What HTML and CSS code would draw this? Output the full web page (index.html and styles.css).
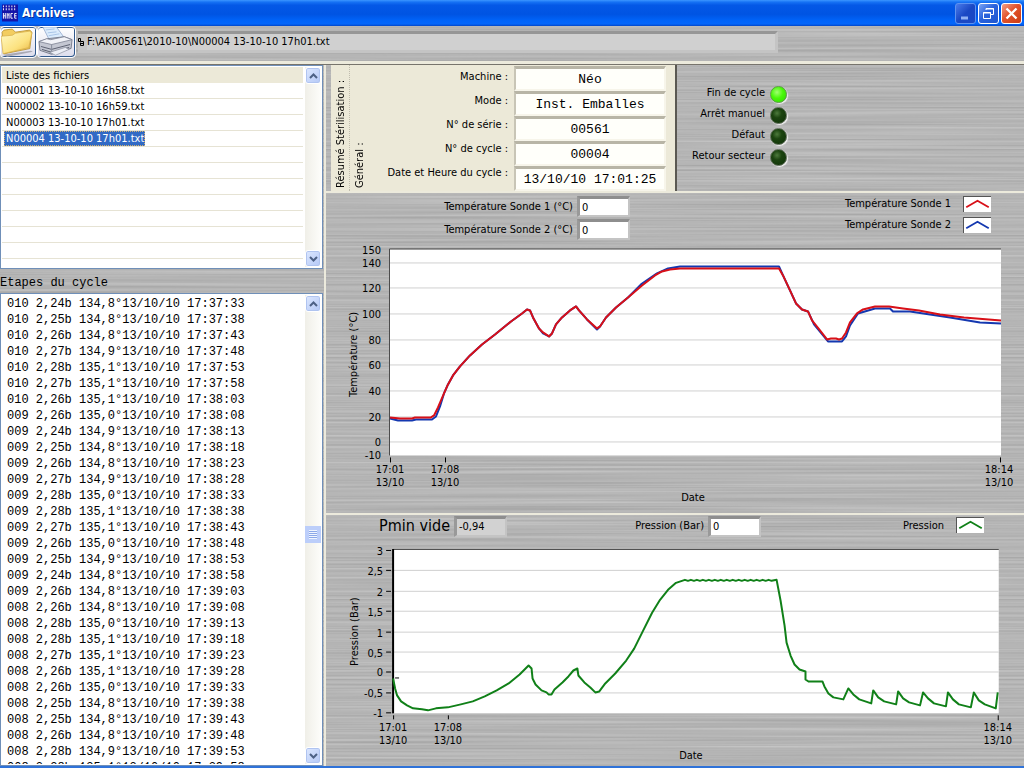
FILE: index.html
```html
<!DOCTYPE html>
<html lang="fr">
<head>
<meta charset="utf-8">
<title>Archives</title>
<link rel="stylesheet" href="styles.css">
</head>
<body>
<div class="window">
  <header class="titlebar">
    <svg class="app-icon" viewBox="0 0 17 18" aria-hidden="true">
      <rect width="17" height="18" fill="#1414a8"/>
      <path d="M1 2h15M1 5h15" stroke="#fff" stroke-width="2" stroke-dasharray="1 2"/>
      <path d="M1.500 9v6M3.500 9v6M1.500 12h2M5.500 9v6M7.500 9v6M6.500 10v2M11.500 9.500h-2v5h2M15.500 9.500h-2v5h2M13.500 12h2" stroke="#fff" fill="none"/>
    </svg>
    <h1 class="title">Archives</h1>
    <div class="caption-buttons">
      <button class="caption caption-dim" aria-label="Réduire"><svg viewBox="0 0 19 19"><path d="M5 14h7" stroke="#8fb0f4" stroke-width="3"/></svg></button>
      <button class="caption" aria-label="Restaurer"><svg viewBox="0 0 19 19" fill="none" stroke="#fff"><path d="M7 6V4.500h7.500v6H12M7 5h8"/><path d="M4.500 8.500h7v6h-7zM4 9h8"/></svg></button>
      <button class="caption caption-close" aria-label="Fermer"><svg viewBox="0 0 19 19"><path d="M4.500 4.500l10 10M14.500 4.500l-10 10" stroke="#fff" stroke-width="2.400"/></svg></button>
    </div>
  </header>

  <div class="toolbar metal">
    <button class="tool" aria-label="Ouvrir">
      <svg viewBox="0 0 34 30">
        <defs><linearGradient id="fold" x1="0" y1="0" x2="1" y2="1"><stop offset="0" stop-color="#fffac8"/><stop offset=".6" stop-color="#fce280"/><stop offset="1" stop-color="#e8b440"/></linearGradient></defs>
        <path d="M2 27l27-4 2 1-25 5z" fill="#a9a9b4"/>
        <path d="M1 5l2-2 8-1 3 3 14-2 2 2-2 16-25 5z" fill="#f3cd60" stroke="#b8902e" stroke-width=".8"/>
        <path d="M0 9l11-1 3-2 14-2 2 2-3 14-25 6z" fill="url(#fold)" stroke="#d8ae48" stroke-width=".7"/>
      </svg>
    </button>
    <button class="tool" aria-label="Imprimer">
      <svg viewBox="0 0 38 30">
        <path d="M5 0h14l8 11-15 3z" fill="#dcecfc" stroke="#8fa6cc" stroke-width=".8"/>
        <path d="M8 3l9-1M10 6l9-1M11 9l11-2" stroke="#a9c4e6"/>
        <path d="M1 15l9-3 17-2 8 3-1 9-20 6L2 24z" fill="#c4c7d2" stroke="#64697a" stroke-width=".8"/>
        <path d="M1 15l13 3 21-5-8-3-14 3-4-1z" fill="#f2f3f8" stroke="#7a7f90" stroke-width=".8"/>
        <path d="M3 20l11 3 19-5M4 23l10 3 18-5" stroke="#5b6070" fill="none"/>
        <path d="M14 18v9" stroke="#868b9a"/>
        <path d="M12 26l16-5 4 2-14 6z" fill="#eceef6" stroke="#7c8190" stroke-width=".6"/>
      </svg>
    </button>
    <label class="path">
      <svg class="path-icon" viewBox="0 0 6 9" fill="none" stroke="#000" aria-hidden="true"><path d="M.500.500h2v3h-2zM2.500 3.500h3v4h-3v-3M3 5.500h2"/></svg>
      <input class="path-input" type="text" readonly aria-label="Chemin du fichier" value="F:\AK00561\2010-10\N00004 13-10-10 17h01.txt">
    </label>
  </div>

  <main class="main">
    <section class="left metal">
      <div class="box files">
        <table class="file-table">
          <thead><tr><th scope="col">Liste des fichiers</th></tr></thead>
          <tbody>
            <tr><td>N00001 13-10-10 16h58.txt</td></tr>
            <tr><td>N00002 13-10-10 16h59.txt</td></tr>
            <tr><td>N00003 13-10-10 17h01.txt</td></tr>
            <tr aria-selected="true"><td><span class="selected">N00004 13-10-10 17h01.txt</span></td></tr>
            <tr><td></td></tr><tr><td></td></tr><tr><td></td></tr><tr><td></td></tr>
            <tr><td></td></tr><tr><td></td></tr><tr><td></td></tr>
          </tbody>
        </table>
        <div class="scroll">
          <button class="arrow" aria-label="Monter"><svg viewBox="0 0 9 6"><path d="M1 5l3.500-3.500L8 5"/></svg></button>
          <button class="arrow" aria-label="Descendre"><svg viewBox="0 0 9 6"><path d="M1 1l3.500 3.500L8 1"/></svg></button>
        </div>
      </div>
      <label class="steps-title" for="steps">Etapes du cycle</label>
      <div class="box steps">
        <textarea class="steps-text" id="steps" readonly>010 2,24b 134,8°13/10/10 17:37:33
010 2,25b 134,8°13/10/10 17:37:38
010 2,26b 134,8°13/10/10 17:37:43
010 2,27b 134,9°13/10/10 17:37:48
010 2,28b 135,1°13/10/10 17:37:53
010 2,27b 135,1°13/10/10 17:37:58
010 2,26b 135,1°13/10/10 17:38:03
009 2,26b 135,0°13/10/10 17:38:08
009 2,24b 134,9°13/10/10 17:38:13
009 2,25b 134,8°13/10/10 17:38:18
009 2,26b 134,8°13/10/10 17:38:23
009 2,27b 134,9°13/10/10 17:38:28
009 2,28b 135,0°13/10/10 17:38:33
009 2,28b 135,1°13/10/10 17:38:38
009 2,27b 135,1°13/10/10 17:38:43
009 2,26b 135,0°13/10/10 17:38:48
009 2,25b 134,9°13/10/10 17:38:53
009 2,24b 134,8°13/10/10 17:38:58
009 2,26b 134,8°13/10/10 17:39:03
008 2,26b 134,8°13/10/10 17:39:08
008 2,28b 135,0°13/10/10 17:39:13
008 2,28b 135,1°13/10/10 17:39:18
008 2,27b 135,1°13/10/10 17:39:23
008 2,26b 135,1°13/10/10 17:39:28
008 2,26b 135,0°13/10/10 17:39:33
008 2,25b 134,8°13/10/10 17:39:38
008 2,25b 134,8°13/10/10 17:39:43
008 2,26b 134,8°13/10/10 17:39:48
008 2,28b 134,9°13/10/10 17:39:53
008 2,28b 135,1°13/10/10 17:39:58</textarea>
        <div class="scroll">
          <button class="arrow" aria-label="Monter"><svg viewBox="0 0 9 6"><path d="M1 5l3.500-3.500L8 5"/></svg></button>
          <button class="thumb" aria-label="Défiler"></button>
          <button class="arrow" aria-label="Descendre"><svg viewBox="0 0 9 6"><path d="M1 1l3.500 3.500L8 1"/></svg></button>
        </div>
      </div>
    </section>

    <section class="right">
      <div class="top metal">
        <div class="summary">
          <h2 class="vertical vertical-main">Résumé Stérilisation :</h2>
          <h3 class="vertical">Général :</h3>
          <div class="labels">
            <label for="machine">Machine :</label>
            <label for="mode">Mode :</label>
            <label for="serie">N° de série :</label>
            <label for="cycle">N° de cycle :</label>
            <label for="date">Date et Heure du cycle :</label>
          </div>
          <div class="values">
            <input id="machine" type="text" readonly value="Néo">
            <input id="mode" type="text" readonly value="Inst. Emballes">
            <input id="serie" type="text" readonly value="00561">
            <input id="cycle" type="text" readonly value="00004">
            <input id="date" type="text" readonly value="13/10/10 17:01:25">
          </div>
        </div>
        <ul class="leds">
          <li>Fin de cycle<span class="led led-on"></span></li>
          <li>Arrêt manuel<span class="led"></span></li>
          <li>Défaut<span class="led"></span></li>
          <li>Retour secteur<span class="led"></span></li>
        </ul>
      </div>

      <div class="panel metal">
        <div class="panel-head">
          <div class="probes">
            <label class="field">Température Sonde 1 (°C)<input class="num" type="text" value="0"></label>
            <label class="field">Température Sonde 2 (°C)<input class="num" type="text" value="0"></label>
          </div>
          <ul class="legend">
            <li>Température Sonde 1<svg class="swatch red" viewBox="0 0 28 16"><path d="M2 11L14 4l12 7"/></svg></li>
            <li>Température Sonde 2<svg class="swatch blue" viewBox="0 0 28 16"><path d="M2 11L14 4l12 7"/></svg></li>
          </ul>
        </div>
        <svg class="chart" viewBox="326 241 698 271" role="img" aria-label="Température en fonction du temps">
          <rect x="390" y="249" width="611" height="206" fill="#fff"/>
          <path class="grid" d="M390 262.500h611M390 287.500h611M390 313.500h611M390 339.500h611M390 364.500h611M390 390.500h611M390 416.500h611M390 441.500h611"/>
          <path class="frame" d="M389.500 455V248.500H1001"/>
          <path class="curve blue" d="M390 418l8 2h14l4-1h16l4-3 4-10 4-13 4-9 5-9 7-9 10-11 12-11 13-10 16-13 11-8 5-4 3 1 3 7 6 11 4 5 6 3 3-3 4-9 6-7 8-7 6-4 3 4 8 9 10 10 3-3 6-9 10-10 12-10 13-13 16-11 11-5 12-2h99l4 9 7 15 6 13 6 6 6 2 6 13 14 17h14l4-5 4-11 8-12 17-5h15l3 3h17l40 6 30 5 21 1"/>
          <path class="curve red" d="M390 417l10 1h12l3-1h16l3-2 4-8 3-7 3-7 4-9 5-9 7-9 10-11 12-11 13-10 16-13 11-8 5-4 3 1 3 7 6 11 4 4 6 4 3-3 4-9 6-7 8-7 6-4 3 4 8 9 10 9 3-2 6-9 10-10 12-10 14-12 13-10 7-4 8-2 10-1h99l4 7 7 15 6 13 6 6 6 2 4 9 8 10 7 9 4-1h5l3 1 3-1 4-6 4-10 7-9 6-4 12-3h14l14 2 16 2 21 4 24 3 37 3"/>
          <path class="tick" d="M390.500 457v5M445.500 457v5M1000.500 457v5"/>
          <g class="ylab"><text x="381" y="254">150</text><text x="381" y="267">140</text><text x="381" y="292">120</text><text x="381" y="318">100</text><text x="381" y="344">80</text><text x="381" y="369">60</text><text x="381" y="395">40</text><text x="381" y="421">20</text><text x="381" y="446">0</text><text x="381" y="459">-10</text></g>
          <g class="xlab"><text x="390" y="473">17:01</text><text x="390" y="486">13/10</text><text x="445" y="473">17:08</text><text x="445" y="486">13/10</text><text x="999" y="473">18:14</text><text x="999" y="486">13/10</text><text x="693" y="501">Date</text><text transform="translate(357 354) rotate(-90)">Température (°C)</text></g>
        </svg>
      </div>

      <div class="panel panel-last metal">
        <div class="panel-head">
          <label class="field pmin">Pmin vide<input class="num num-off" type="text" readonly value="-0,94"></label>
          <label class="field pression">Pression (Bar)<input class="num" type="text" value="0"></label>
          <ul class="legend legend-short">
            <li>Pression<svg class="swatch green" viewBox="0 0 28 16"><path d="M2 11L14 4l12 7"/></svg></li>
          </ul>
        </div>
        <svg class="chart" viewBox="326 540 698 226" role="img" aria-label="Pression en fonction du temps">
          <rect x="392" y="549" width="608" height="164" fill="#fff"/>
          <path class="grid" d="M392 569.500h608M392 590.500h608M392 610.500h608M392 631.500h608M392 651.500h608M392 671.500h608M392 692.500h608"/>
          <path class="frame" d="M392 548.500h608"/>
          <path class="axis" d="M392 548v165"/>
          <path class="tick" d="M385 549.500h5M385 569.500h5M385 590.500h5M385 610.500h5M385 631.500h5M385 651.500h5M385 671.500h5M385 692.500h5M385 712.500h5M394 677.500h4M392.500 715v4M447.500 715v4M999.500 715v5"/>
          <path class="curve green" d="M392 678l2 10 2 7 4 6 6 4 6 3 9 1 6 1 8-2 12-1 13-3 12-3 12-5 12-6 12-7 11-9 6-6 3-3 3 3 1 10 3 6 6 6 5 2 2 2h3l3-5 8-7 6-6 5-6 4-2 1 7 6 7 6 5 5 5 4-1 6-8 10-10 11-13 8-12 9-18 9-18 8-13 8-10 8-7 6-2 3-1 3 1 3-1 3 1 3-1 3 1 3-1 3 1 3-1 3 1 3-1 3 1 3-1 3 1 3-1 3 1 3-1 3 1 3-1 3 1 3-1 3 1 3-1 3 1 3-1 3 1 3-1 3 1 3-1 3 1 5-1 4 21 4 25 2 17 4 13 4 9 5 5 6 2v8l3 2h14l2 5 4 7 5 4 10 2L849 688l5 6 6 5 12 4L874 690l5 7 6 4 12 3L899 691l5 7 6 4 11 3L924 692l5 6 6 5 12 3L949 692l5 7 6 5 12 3L975 692l5 8 6 4 11 4L999 692"/>
          <g class="ylab"><text x="382" y="554">3</text><text x="382" y="574">2,5</text><text x="382" y="595">2</text><text x="382" y="615">1,5</text><text x="382" y="636">1</text><text x="382" y="656">0,5</text><text x="382" y="676">0</text><text x="382" y="697">-0,5</text><text x="382" y="717">-1</text></g>
          <g class="xlab"><text x="392" y="731">17:01</text><text x="392" y="744">13/10</text><text x="447" y="731">17:08</text><text x="447" y="744">13/10</text><text x="999" y="731">18:14</text><text x="999" y="744">13/10</text><text x="691" y="759">Date</text><text transform="translate(357 631) rotate(-90)">Pression (Bar)</text></g>
        </svg>
      </div>
    </section>
  </main>
</div>
</body>
</html>
```

FILE: styles.css
```css
* { box-sizing: border-box; }

body {
  margin: 0;
  font: 11px/16px "DejaVu Sans Condensed", "DejaVu Sans", "Noto Sans", sans-serif;
  color: #000;
}

h1, h2, h3, ul { margin: 0; padding: 0; font-size: inherit; font-weight: normal; list-style: none; }
button, input, textarea { margin: 0; padding: 0; border: 0; border-radius: 0; outline: 0; font: inherit; color: inherit; }
svg { display: block; }

.window {
  display: flex;
  flex-direction: column;
  height: 100vh;
  min-height: 600px;
  border-bottom: 2px solid #2f72d8;
  overflow: hidden;
}

.metal {
  background: #b4b4b4 url("data:image/svg+xml,%3Csvg xmlns='http://www.w3.org/2000/svg' width='700' height='400'%3E%3Cfilter id='n' x='0' y='0' width='100%25' height='100%25' color-interpolation-filters='sRGB'%3E%3CfeTurbulence type='fractalNoise' baseFrequency='.003 .45' numOctaves='2' stitchTiles='stitch'/%3E%3CfeColorMatrix values='.18 0 0 0 .62 .18 0 0 0 .62 .18 0 0 0 .62 0 0 0 0 1'/%3E%3C/filter%3E%3Crect width='700' height='400' filter='url(%23n)'/%3E%3C/svg%3E");
}

/* Title bar */
.titlebar {
  display: flex;
  align-items: center;
  gap: 4px;
  flex: none;
  height: 26px;
  padding: 0 2px;
  background: linear-gradient(#3c96ff 0, #1672f4 8%, #0458e6 20%, #0054e3 55%, #0064fa 80%, #0466fa 92%, #0246c8);
}
.app-icon { width: 16px; height: 18px; }
.title { font: bold 12px/18px "DejaVu Sans Condensed", "DejaVu Sans", sans-serif; color: #fff; text-shadow: 1px 1px #0a2f94; }
.caption-buttons { display: flex; gap: 2px; margin-left: auto; }
.caption {
  width: 21px;
  height: 21px;
  border: 1px solid #fff;
  border-radius: 3px;
  background: linear-gradient(135deg, #7ba4f4, #2a62dc 45%, #1e56d0);
}
.caption-dim { border-color: #5e92f0; background: linear-gradient(135deg, #4a7cec, #1a48c4 50%); }
.caption-close { background: linear-gradient(135deg, #f0a088, #e2532c 45%, #cc3c14); }

/* Toolbar */
.toolbar {
  display: flex;
  flex: none;
  height: 39px;
  border-bottom: 1px solid #77746c;
  box-shadow: inset 0 -3px #eceadc;
}
.tool {
  width: 37px;
  height: 32px;
  border: 1px solid #fff;
  border-radius: 4px;
  background: linear-gradient(#fff, #dcdcec);
  box-shadow: inset -1px -1px #31598c, inset 0 1px #31598c;
  overflow: hidden;
}
.tool + .tool { width: 39px; }
.path {
  display: flex;
  align-items: center;
  gap: 3px;
  width: 70%;
  max-width: 700px;
  height: 22px;
  margin: 5px 0 0 2px;
  border-top: 3px solid #969696;
  border-right: 3px solid #c4c4c4;
  border-bottom: 3px solid #c4c4c4;
  background: #c6c6c6;
}
.path-icon { width: 6px; height: 9px; }
.path-input { flex: 1; height: 16px; min-width: 0; background: #d0d0d0; }

/* Main split */
.main { display: flex; flex: 1; min-height: 0; }
.left {
  display: flex;
  flex-direction: column;
  flex: none;
  width: 326px;
  border-right: 2px solid #eceadc;
}
.box { display: flex; margin-right: 1px; border: 1px solid #6f8fb8; background: #fff; }
.files { flex: none; height: 204px; padding: 1px; }
.file-table { flex: 1; align-self: start; border-spacing: 0; margin-right: 2px; }
.file-table th { height: 16px; padding: 0 4px; background: #ece9d8; font-weight: normal; text-align: left; line-height: 15px; }
.file-table td { height: 16px; padding: 0 4px; border-bottom: 1px solid #e6e3d4; line-height: 15px; }
.selected { display: inline-block; margin-left: -2px; padding: 0 1px 0 2px; outline: 1px dotted #d0b070; outline-offset: -1px; background: #316ac5; color: #fff; }

.scroll {
  display: flex;
  flex-direction: column;
  justify-content: space-between;
  flex: none;
  width: 16px;
  background: linear-gradient(90deg, #f0efe8, #fdfdfa);
}
.arrow {
  display: grid;
  place-items: center;
  width: 16px;
  height: 17px;
  border: 1px solid #fff;
  border-radius: 3px;
  background: linear-gradient(135deg, #dde8ff, #b4c8f6);
  box-shadow: inset 0 0 0 1px #b0c4f0;
}
.arrow svg { width: 9px; height: 6px; }
.arrow path { fill: none; stroke: #4d6185; stroke-width: 2; }
.thumb {
  width: 16px;
  height: 17px;
  margin-top: 10px;
  border: 4px solid #bccefa;
  background: repeating-linear-gradient(#f0f5ff 0 1px, #8ca8e8 1px 2px);
}

.steps-title { flex: none; height: 24px; padding-top: 6px; font: 12px/16px "Liberation Mono", monospace; }
.steps { flex: 1; min-height: 0; padding: 1px; }
.steps-text {
  flex: 1;
  min-width: 0;
  padding: 1px 0 0 5px;
  border: 0;
  resize: none;
  overflow: hidden;
  white-space: pre;
  font: 12px/16px "Liberation Mono", monospace;
}

/* Right side */
.right { display: flex; flex-direction: column; flex: 1; min-width: 0; }
.top { display: flex; flex: none; height: 128px; border-bottom: 2px solid #eceadc; }
.summary {
  display: flex;
  flex: 0 1 346px;
  margin-left: 5px;
  padding-right: 9px;
  border-right: 2px solid #5a5852;
  background: #ece9d8;
}
.vertical {
  width: 19px;
  padding-top: 3px;
  writing-mode: vertical-rl;
  transform: rotate(180deg);
  line-height: 19px;
  white-space: nowrap;
}
.vertical-main { border-left: 1px dotted #c0bcae; }
.labels { display: flex; flex-direction: column; flex: 1; padding-right: 6px; line-height: 24px; text-align: right; white-space: nowrap; }
.values { display: flex; flex-direction: column; width: 152px; padding-top: 1px; }
.values input {
  width: 100%;
  height: 25px;
  border: 2px solid #f7f5ea;
  border-top: 3px solid #b8b5a6;
  border-left-color: #c8c5b6;
  background: #fffffa;
  font: 13px/18px "Liberation Mono", monospace;
  text-align: center;
}
.leds { width: 110px; padding-top: 17px; line-height: 21px; }
.leds li { display: flex; align-items: center; justify-content: flex-end; gap: 5px; }
.led {
  width: 17px;
  height: 17px;
  margin-top: 4px;
  border-radius: 50%;
  border: 1px solid #5e6e58;
  background: radial-gradient(circle at 40% 35%, #4d7a3c, #1c4410 35%, #0e3006);
  box-shadow: 1px 1px 1px #f4f4f4;
}
.led-on { border-color: #5aa040; background: radial-gradient(circle at 40% 35%, #a0ff70, #48f808 45%, #30d800); }

.panel { display: flex; flex-direction: column; flex: 321 1 0; min-height: 0; border-bottom: 2px solid #eceadc; }
.panel-last { flex-grow: 252; border-bottom: 0; }
.panel-head { display: flex; flex: none; height: 48px; }
.probes { width: 304px; padding-top: 2px; }
.field { display: flex; align-items: center; justify-content: flex-end; gap: 4px; height: 23px; white-space: nowrap; }
.num {
  width: 53px;
  height: 21px;
  padding-left: 2px;
  border: 2px solid #c4c4c4;
  border-top: 3px solid #8e8e8e;
  border-left: 3px solid #999;
  background: #fff;
}
.num-off { background: #d2d2d2; }
.legend { margin: 0 33px 0 auto; line-height: 21px; }
.legend li { display: flex; align-items: center; gap: 12px; height: 21px; }
.legend-short { margin-right: 40px; }
.swatch { width: 28px; height: 16px; border-top: 1px solid #555; border-left: 1px solid #555; background: #fff; }
.swatch path { fill: none; stroke-width: 2; }
.red { stroke: #d81018; }
.blue { stroke: #1438b0; }
.green { stroke: #108018; }
.pmin { width: 181px; font-size: 16px; }
.pmin .num { font-size: 11px; }
.pression { width: 254px; }
.panel-last .panel-head { height: 26px; }

/* Charts */
.chart { flex: 1; width: 100%; min-height: 0; }
.grid { stroke: #d0d0d0; }
.frame { fill: none; stroke: #4c4c4c; }
.axis { stroke: #000; stroke-width: 2; }
.tick { stroke: #000; }
.curve { fill: none; stroke-width: 2; stroke-linejoin: round; }
.ylab text { text-anchor: end; }
.xlab text { text-anchor: middle; }
```
